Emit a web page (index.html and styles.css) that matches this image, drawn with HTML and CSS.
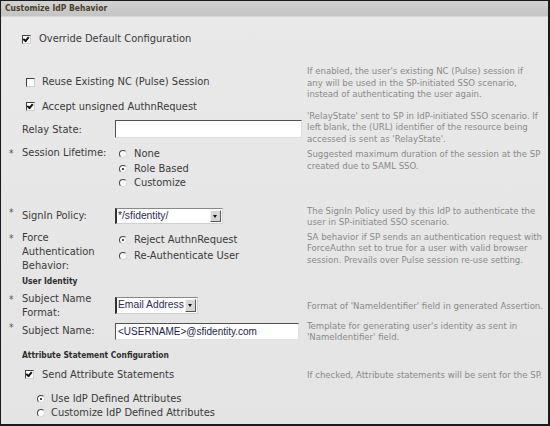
FILE: index.html
```html
<!DOCTYPE html>
<html lang="en">
<head>
    <meta charset="UTF-8">
    <title>Customize IdP Behavior</title>
    <link rel="stylesheet" href="styles.css">
</head>
<body>
    <div class="panel">
        <div class="panel-head">Customize IdP Behavior</div>
        <div class="panel-body">

            <div class="field row-override">
                <div class="opt span3">
                    <span class="check on"></span>Override Default Configuration
                </div>
            </div>

            <div class="field row-reuse">
                <div class="opt span3 indent">
                    <span class="check"></span>Reuse Existing NC (Pulse) Session
                </div>
                <div class="desc">If enabled, the user's existing NC (Pulse) session if any will be used in the SP-initiated SSO scenario, instead of authenticating the user again.</div>
            </div>

            <div class="field row-accept">
                <div class="opt span3 indent">
                    <span class="check on"></span>Accept unsigned AuthnRequest
                </div>
            </div>

            <div class="field row-relay">
                <div class="star"></div>
                <div class="label">Relay State:</div>
                <div class="control"><input type="text" class="text-box relay-box" value=""></div>
                <div class="desc">'RelayState' sent to SP in IdP-initiated SSO scenario. If left blank, the (URL) identifier of the resource being accessed is sent as 'RelayState'.</div>
            </div>

            <div class="field row-session top">
                <div class="star">*</div>
                <div class="label">Session Lifetime:</div>
                <div class="control radios">
                    <div class="radio-item"><span class="radio"></span>None</div>
                    <div class="radio-item"><span class="radio on"></span>Role Based</div>
                    <div class="radio-item"><span class="radio"></span>Customize</div>
                </div>
                <div class="desc">Suggested maximum duration of the session at the SP created due to SAML SSO.</div>
            </div>

            <div class="field row-signin">
                <div class="star">*</div>
                <div class="label">SignIn Policy:</div>
                <div class="control">
                    <div class="select-box signin-select"><span class="select-text">*/sfidentity/</span><span class="select-btn"></span></div>
                </div>
                <div class="desc">The SignIn Policy used by this IdP to authenticate the user in SP-initiated SSO scenario.</div>
            </div>

            <div class="field row-force top">
                <div class="star">*</div>
                <div class="label">Force Authentication Behavior:</div>
                <div class="control radios wide">
                    <div class="radio-item"><span class="radio on"></span>Reject AuthnRequest</div>
                    <div class="radio-item"><span class="radio"></span>Re-Authenticate User</div>
                </div>
                <div class="desc">SA behavior if SP sends an authentication request with ForceAuthn set to true for a user with valid browser session. Prevails over Pulse session re-use setting.</div>
            </div>

            <div class="section-title title-identity">User Identity</div>

            <div class="field row-format">
                <div class="star">*</div>
                <div class="label">Subject Name Format:</div>
                <div class="control">
                    <div class="select-box format-select"><span class="select-text">Email Address</span><span class="select-btn"></span></div>
                </div>
                <div class="desc">Format of 'NameIdentifier' field in generated Assertion.</div>
            </div>

            <div class="field row-subject">
                <div class="star">*</div>
                <div class="label">Subject Name:</div>
                <div class="control"><input type="text" class="text-box subject-box" value="&lt;USERNAME&gt;@sfidentity.com"></div>
                <div class="desc">Template for generating user's identity as sent in 'NameIdentifier' field.</div>
            </div>

            <div class="section-title title-attr">Attribute Statement Configuration</div>

            <div class="field row-send">
                <div class="opt span3 indent-small">
                    <span class="check on"></span>Send Attribute Statements
                </div>
                <div class="desc">If checked, Attribute statements will be sent for the SP.</div>
            </div>

            <div class="attr-radios">
                <div class="radio-item"><span class="radio on"></span>Use IdP Defined Attributes</div>
                <div class="radio-item"><span class="radio"></span>Customize IdP Defined Attributes</div>
            </div>

        </div>
    </div>
</body>
</html>
```

FILE: styles.css
```css
body {
    margin: 0;
    background: #fff;
}

.panel {
    width: 550px;
    height: 426px;
    box-sizing: border-box;
    border: 1px solid #1b1b1b;
    border-right-width: 2px;
    border-bottom-width: 2px;
    background: linear-gradient(to bottom, #e9e9e9, #e4e4e4);
    font-family: "DejaVu Sans Condensed", "DejaVu Sans", sans-serif;
    color: #3a3a3a;
    overflow: hidden;
}

.panel-head {
    height: 15px;
    line-height: 15px;
    padding-left: 4px;
    background: linear-gradient(to bottom, #d2d2d2, #c4c4c4);
    border-bottom: 1px solid #d8d8d8;
    font-size: 8.5px;
    font-weight: bold;
    color: #4a4128;
}

.panel-body {
    padding-left: 8px;
}

.field {
    display: grid;
    grid-template-columns: 13px 93px 192px 1fr;
    align-items: center;
    font-size: 11px;
    line-height: 14px;
}
.field.top {
    align-items: start;
}

.span3 {
    grid-column: 2 / 4;
}

.opt {
    display: flex;
    align-items: center;
}
.opt .check {
    margin-right: 8px;
}
.indent {
    padding-left: 4px;
}
.indent .check {
    margin-right: 7px;
}
.indent-small {
    padding-left: 3px;
}
.indent-small .check {
    margin-right: 8px;
}

.star {
    font-size: 10px;
    color: #555;
    align-self: start;
    padding-top: 1px;
}

.desc {
    font-size: 9.5px;
    line-height: 11.5px;
    color: #8a8a8a;
    padding-right: 4px;
}
.row-reuse .desc {
    padding-right: 16px;
}
.row-session .desc {
    padding-top: 2px;
}

.row-relay .label {
    align-self: start;
    padding-top: 13px;
}

/* checkboxes and radios */
.check {
    display: inline-block;
    width: 7px;
    height: 7px;
    background: #fff;
    border-top: 1px solid #404040;
    border-left: 1px solid #404040;
    border-right: 1px solid #d0d0d0;
    border-bottom: 1px solid #d0d0d0;
    position: relative;
    flex: none;
}
.check.on::after {
    content: "";
    position: absolute;
    left: 1px;
    top: 0px;
    width: 2px;
    height: 4px;
    border-right: 2px solid #111;
    border-bottom: 2px solid #111;
    transform: rotate(40deg);
    transform-origin: 60% 50%;
}

.radio {
    display: inline-block;
    width: 6px;
    height: 6px;
    border-radius: 50%;
    background: #fff;
    border: 1px solid;
    border-color: #444 #d8d8d8 #d8d8d8 #444;
    margin-right: 7px;
    position: relative;
    flex: none;
}
.radio.on::after {
    content: "";
    position: absolute;
    left: 2px;
    top: 2px;
    width: 2px;
    height: 2px;
    border-radius: 50%;
    background: #111;
}

.radio-item {
    display: flex;
    align-items: center;
}

.radios {
    padding-left: 4px;
    padding-top: 1px;
}
.radios .radio-item {
    height: 14.5px;
}
.radios.wide .radio-item {
    height: 16px;
}

/* text inputs */
.text-box {
    display: block;
    box-sizing: border-box;
    height: 18px;
    margin: 0;
    padding: 0 2px;
    background: #fff;
    border: 1px solid;
    border-color: #505050 #e0e0e0 #e0e0e0 #505050;
    font-family: "Liberation Sans", Arial, sans-serif;
    font-size: 10px;
    color: #23234a;
    outline: none;
}
.relay-box {
    width: 187px;
    margin-top: 5px;
}
.subject-box {
    width: 184px;
    height: 17px;
}

/* fake select */
.select-box {
    display: flex;
    box-sizing: border-box;
    height: 16px;
    background: #fff;
    border: 1px solid;
    border-color: #888 #d0d0d0 #d0d0d0 #333;
    border-left-width: 2px;
    font-family: "Liberation Sans", Arial, sans-serif;
    font-size: 10.3px;
    line-height: 14px;
    color: #2b2b55;
}
.select-text {
    flex: 1;
    padding-left: 1px;
    white-space: nowrap;
    overflow: hidden;
}
.select-btn {
    width: 11px;
    margin: 1px;
    background: #d6d6d6;
    border: 1px solid;
    border-color: #f4f4f4 #555 #555 #f4f4f4;
    position: relative;
    box-sizing: border-box;
}
.select-btn::after {
    content: "";
    position: absolute;
    left: 2px;
    top: 4px;
    border-left: 2.5px solid transparent;
    border-right: 2.5px solid transparent;
    border-top: 3px solid #111;
}
.signin-select {
    width: 108px;
}
.format-select {
    width: 83px;
    height: 17px;
}

.section-title {
    font-size: 8.4px;
    font-weight: bold;
    line-height: 12px;
    color: #2e2e2e;
    padding-left: 13px;
}

.attr-radios {
    padding-left: 28px;
    font-size: 11px;
    line-height: 14px;
}
.attr-radios .radio-item {
    height: 14px;
}
.attr-radios .radio {
    margin-right: 6px;
}

/* vertical rhythm, matched to the screen */
.row-override { margin-top: 15px; }
.row-reuse { margin-top: 19px; }
.row-accept { margin-top: 0; }
.row-relay { margin-top: -4px; }
.row-session { margin-top: 2px; }
.row-signin { margin-top: 14px; }
.row-force { margin-top: 3px; }
.title-identity { margin-top: 2px; }
.row-format { margin-top: 5px; }
.row-subject { margin-top: 0; }
.title-attr { margin-top: 6px; }
.row-send { margin-top: 7px; }
.attr-radios { margin-top: 10px; }
```
